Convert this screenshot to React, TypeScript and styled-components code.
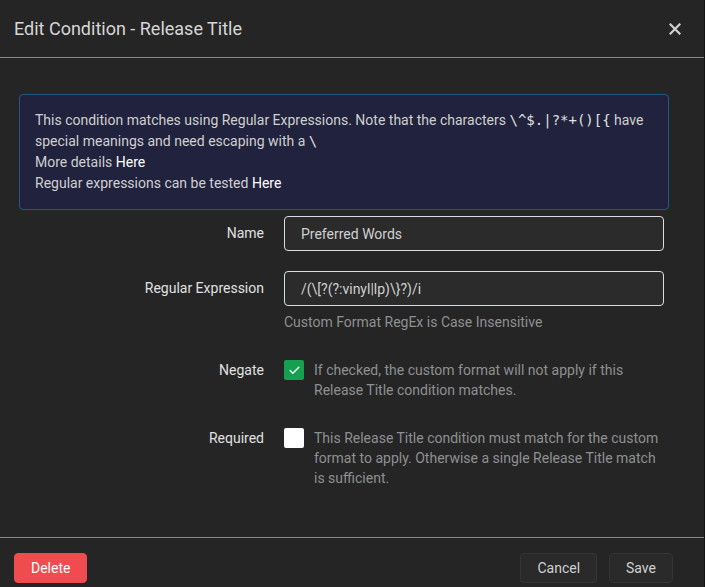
import React from 'react';
import styled, { createGlobalStyle } from 'styled-components';

const GlobalStyle = createGlobalStyle`
  html, body {
    margin: 0;
    padding: 0;
    background: #141414;
  }

  body {
    font-family: Roboto, 'Noto Sans', 'Liberation Sans', sans-serif;
    color: #ccc;
  }
`;

// modal shell

const Modal = styled.div`
  width: 704px;
  height: 587px;
  overflow: hidden;
  background: #252525;
  display: flex;
  flex-direction: column;
`;

const Header = styled.div`
  height: 58px;
  flex-shrink: 0;
  box-sizing: border-box;
  display: flex;
  align-items: center;
  justify-content: space-between;
  padding: 0 23px 0 14px;
  border-bottom: 1px solid #8a8a8a;
`;

const Title = styled.h2`
  margin: 0;
  font-size: 18px;
  font-weight: 400;
  color: #d6d6d6;
`;

const CloseButton = styled.button`
  background: none;
  border: none;
  padding: 0;
  display: flex;
  align-items: center;
  color: #d0d0d0;
  cursor: pointer;
`;

const Body = styled.div`
  height: 479px;
  flex-shrink: 0;
  box-sizing: border-box;
  padding: 36px 35px 0 19px;
`;

const Footer = styled.div`
  flex-shrink: 0;
  display: flex;
  align-items: flex-start;
  justify-content: space-between;
  padding: 15px 31px 15px 14px;
  border-top: 1px solid #8a8a8a;
`;

const ButtonGroup = styled.div`
  display: flex;
  gap: 12px;
`;

const Button = styled.button<{ kind?: 'danger' | 'default' }>`
  height: 30px;
  box-sizing: border-box;
  padding: 0 16px;
  border-radius: 4px;
  font-family: Roboto, 'Liberation Sans', sans-serif;
  font-size: 14px;
  font-weight: 400;
  cursor: pointer;
  background: ${(props) => (props.kind === 'danger' ? '#f04b4f' : '#2a2a2a')};
  border: 1px solid ${(props) => (props.kind === 'danger' ? '#f04b4f' : '#353535')};
  color: ${(props) => (props.kind === 'danger' ? '#fff' : '#d0d0d0')};
`;

// info alert

const Alert = styled.div`
  background: #21223d;
  border: 1px solid #225b82;
  border-radius: 4px;
  padding: 15px 15px;
  font-size: 14px;
  line-height: 21px;
  color: #cfcfcf;
`;

const Code = styled.code`
  font-family: 'DejaVu Sans Mono', 'Liberation Mono', monospace;
  font-size: 14px;
  line-height: 0;
  color: #e0e0e0;
`;

const Link = styled.a`
  color: #fff;
  text-decoration: none;
`;

// form

const Form = styled.div`
  margin-top: 6px;
  display: flex;
  flex-direction: column;
  gap: 20px;
`;

const Group = styled.div<{ top?: boolean }>`
  display: flex;
  align-items: ${(props) => (props.top ? 'flex-start' : 'center')};
  gap: 20px;
`;

const Label = styled.label<{ check?: boolean }>`
  width: 245px;
  flex-shrink: 0;
  text-align: right;
  font-size: 14px;
  font-weight: 400;
  color: #e0e0e0;
  line-height: ${(props) => (props.check ? '20px' : '35px')};
  margin-top: ${(props) => (props.check ? '8px' : '0')};
`;

const Field = styled.div`
  width: 380px;
  display: flex;
  flex-direction: column;
`;

const Input = styled.div`
  height: 35px;
  box-sizing: border-box;
  background: #2b2b2b;
  border: 1px solid #d8dde0;
  border-radius: 4px;
  padding: 0 16px;
  display: flex;
  align-items: center;
  font-size: 14px;
  color: #d0d0d0;
`;

const HelpText = styled.div`
  margin-top: 6px;
  font-size: 14px;
  line-height: 20px;
  color: #8e9092;
`;

const CheckRow = styled.div`
  width: 380px;
  padding-top: 8px;
  display: flex;
  align-items: flex-start;
  gap: 10px;
`;

const CheckBox = styled.span<{ checked?: boolean }>`
  width: 20px;
  height: 20px;
  flex-shrink: 0;
  border-radius: 2px;
  background: ${(props) => (props.checked ? '#14a04e' : '#fff')};
  display: flex;
  align-items: center;
  justify-content: center;
`;

const CheckText = styled.div`
  font-size: 14px;
  line-height: 20px;
  color: #8e9092;
`;

const Check = () => (
  <svg width='13' height='13' viewBox='0 0 24 24' fill='none' stroke='#fff' strokeWidth='2.6' strokeLinecap='round' strokeLinejoin='round'>
    <path d='M20 6 9 17l-5-5' />
  </svg>
);

const regex = '/(\\[?(?:vinyl|lp)\\}?)/i';

export default function App() {
  return (
    <>
      <GlobalStyle />
      <Modal>
        <Header>
          <Title>Edit Condition - Release Title</Title>
          <CloseButton aria-label='close'>
            <svg width='12' height='12' viewBox='0 0 12 12' stroke='currentColor' strokeWidth='2.2' strokeLinecap='square'>
              <path d='M1.5 1.5l9 9M10.5 1.5l-9 9' />
            </svg>
          </CloseButton>
        </Header>
        <Body>
          <Alert>
            <div>
              This condition matches using Regular Expressions. Note that the characters{' '}
              <Code>\^$.|?*+()[{'{'}</Code> have special meanings and need escaping with a{' '}
              <Code>\</Code>
            </div>
            <div>
              More details <Link href='#'>Here</Link>
            </div>
            <div>
              Regular expressions can be tested <Link href='#'>Here</Link>
            </div>
          </Alert>
          <Form>
            <Group>
              <Label>Name</Label>
              <Field>
                <Input>Preferred Words</Input>
              </Field>
            </Group>
            <Group top>
              <Label>Regular Expression</Label>
              <Field>
                <Input>{regex}</Input>
                <HelpText>Custom Format RegEx is Case Insensitive</HelpText>
              </Field>
            </Group>
            <Group top>
              <Label check>Negate</Label>
              <CheckRow>
                <CheckBox checked>
                  <Check />
                </CheckBox>
                <CheckText>
                  If checked, the custom format will not apply if this Release Title condition matches.
                </CheckText>
              </CheckRow>
            </Group>
            <Group top>
              <Label check>Required</Label>
              <CheckRow>
                <CheckBox />
                <CheckText>
                  This Release Title condition must match for the custom format to apply. Otherwise a single
                  Release Title match is sufficient.
                </CheckText>
              </CheckRow>
            </Group>
          </Form>
        </Body>
        <Footer>
          <Button kind='danger'>Delete</Button>
          <ButtonGroup>
            <Button>Cancel</Button>
            <Button>Save</Button>
          </ButtonGroup>
        </Footer>
      </Modal>
    </>
  );
}
